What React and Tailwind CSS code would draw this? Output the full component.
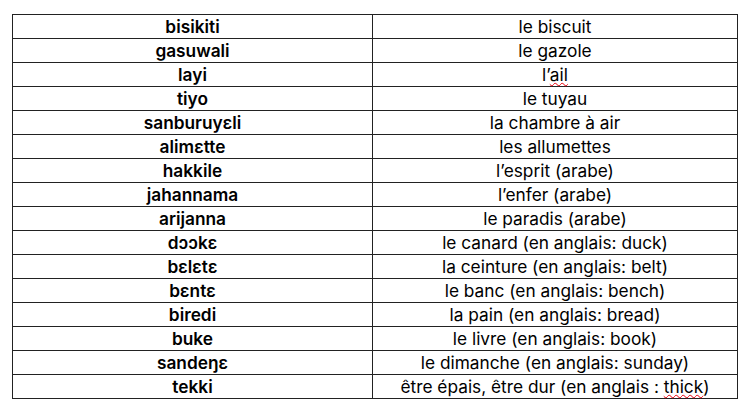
const rows = [
  ["bisikiti", "le biscuit"],
  ["gasuwali", "le gazole"],
  ["layi", "ail"],
  ["tiyo", "le tuyau"],
  ["sanburuyɛli", "la chambre à air"],
  ["alimɛtte", "les allumettes"],
  ["hakkile", "l’esprit (arabe)"],
  ["jahannama", "l’enfer (arabe)"],
  ["arijanna", "le paradis (arabe)"],
  ["dɔɔkɛ", "le canard (en anglais: duck)"],
  ["bɛlɛtɛ", "la ceinture (en anglais: belt)"],
  ["bɛntɛ", "le banc (en anglais: bench)"],
  ["biredi", "la pain (en anglais: bread)"],
  ["buke", "le livre (en anglais: book)"],
  ["sandeŋɛ", "le dimanche (en anglais: sunday)"],
  ["tekki", "thick"],
];

const squiggle = "underline decoration-wavy decoration-red-600 decoration-1 underline-offset-[1px]";

function Right({ word, fr }) {
  if (word === "layi") {
    return (
      <>
        l’<span className={squiggle}>ail</span>
      </>
    );
  }
  if (word === "tekki") {
    return (
      <>
        être épais, être dur (en anglais : <span className={squiggle}>thick</span>)
      </>
    );
  }
  return fr;
}

export default function App() {
  return (
    <div className="w-[750px] h-[413px] bg-white pt-[14px] pl-[12px] font-['Inter','Liberation_Sans',sans-serif] text-black">
      <table className="border-collapse w-[726px] text-[17.3px] leading-none">
        <tbody>
          {rows.map(([word, fr]) => (
            <tr key={word} className="h-[24px]">
              <td className="w-[360px] border border-[#222] text-center font-semibold align-middle pt-[1px]">{word}</td>
              <td className="border border-[#222] text-center align-middle pt-[1px]">
                <Right word={word} fr={fr} />
              </td>
            </tr>
          ))}
        </tbody>
      </table>
    </div>
  );
}
